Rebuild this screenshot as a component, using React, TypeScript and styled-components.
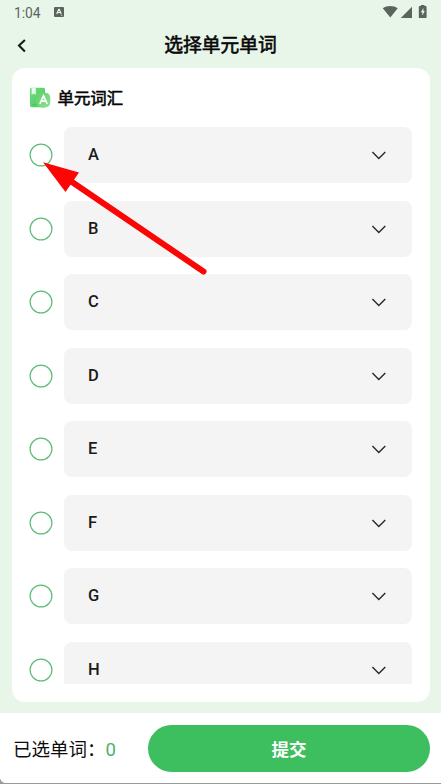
import React from "react";
import styled, { createGlobalStyle } from "styled-components";

const GlobalStyle = createGlobalStyle`
  * { box-sizing: border-box; }
  body {
    margin: 0;
    background: #9a9a9a;
    font-family: Roboto, "Noto Sans CJK SC", sans-serif;
    color: #0d0d0d;
  }
`;

const Screen = styled.main`
  position: relative;
  display: flex;
  flex-direction: column;
  width: 441px;
  height: 783px;
  overflow: hidden;
  background: #e8f6ea;
  border-radius: 0 0 0 6px;
`;

const Page = styled.div`
  height: 784px;
  overflow: hidden;
`;

const StatusBar = styled.div`
  display: flex;
  align-items: center;
  justify-content: space-between;
  height: 24px;
  padding: 0 14px;
  color: #5c635d;
`;

const StatusGroup = styled.div<{ $gap: number }>`
  display: flex;
  align-items: center;
  gap: ${(p) => p.$gap}px;
`;

const Clock = styled.span`
  font-size: 13.8px;
  line-height: 24px;
  letter-spacing: -0.05px;
  padding-top: 1px;
`;

const TitleBar = styled.header`
  display: grid;
  grid-template-columns: 44px 1fr 44px;
  align-items: center;
  height: 44px;
`;

const BackButton = styled.button`
  display: flex;
  padding: 0 0 0 16px;
  border: 0;
  background: none;
  color: #161b17;
`;

const Title = styled.h1`
  margin: 0;
  font-size: 18.8px;
  font-weight: 400;
  line-height: 44px;
  text-align: center;
  color: #080808;
  -webkit-text-stroke: 0.6px #080808;
`;

const Card = styled.section`
  display: flex;
  flex-direction: column;
  height: 634px;
  margin: 0 11px 0 12px;
  padding: 0 18px 18px 17px;
  background: #fff;
  border-radius: 13px;
`;

const CardHeader = styled.div`
  display: flex;
  align-items: center;
  gap: 6.6px;
  height: 59px;
  flex: none;
`;

const CardTitle = styled.h2`
  margin: 0;
  font-size: 16.4px;
  font-weight: 400;
  line-height: 24px;
  color: #080808;
  padding-top: 3px;
  -webkit-text-stroke: 0.6px #080808;
`;

const UnitList = styled.ul`
  display: flex;
  flex-direction: column;
  gap: 17.5px;
  flex: 1;
  min-height: 0;
  margin: 0;
  padding: 0;
  overflow: hidden;
  list-style: none;
`;

const UnitRow = styled.li`
  display: flex;
  align-items: center;
  gap: 11px;
  flex: none;
  height: 56px;
`;

const Radio = styled.span`
  width: 24px;
  height: 24px;
  flex: none;
`;

const UnitPanel = styled.div`
  display: flex;
  align-items: center;
  justify-content: space-between;
  flex: 1;
  height: 56px;
  padding: 0 25px 0 24px;
  background: #f4f4f4;
  border-radius: 8px;
`;

const UnitName = styled.span`
  font-size: 16.5px;
  font-weight: 500;
  line-height: 24px;
  color: #1a1a1a;
`;

const Footer = styled.footer`
  display: flex;
  align-items: center;
  height: 71px;
  margin-top: 11px;
  padding: 0 11px 0 13px;
  background: #fff;
`;

const Summary = styled.div`
  display: flex;
  align-items: center;
  width: 135px;
  padding-top: 3px;
  font-size: 18.5px;
  line-height: 28px;
`;

const Count = styled.span`
  color: #4db167;
`;

const Submit = styled.button`
  flex: 1;
  height: 47px;
  border: 0;
  border-radius: 24px;
  background: #3dbe5f;
  color: #fff;
  font-family: inherit;
  font-size: 17.5px;
  font-weight: 700;
  padding: 0;
`;

const Pointer = styled.svg`
  position: absolute;
  left: 0;
  top: 140px;
  pointer-events: none;
`;

const UNITS = ["A", "B", "C", "D", "E", "F", "G", "H"];

function KeyboardIcon() {
  return (
    <svg width="10" height="10" viewBox="0 0 10 10">
      <rect width="10" height="10" rx="1" fill="currentColor" />
      <path d="M2.700 7 4.700 2.300h.6L7.200 7M3.500 5.500h3" fill="none" stroke="#e8f6ea" strokeWidth="1.200" />
      <path d="M7 8.300h1.300" stroke="#e8f6ea" strokeWidth=".8" />
    </svg>
  );
}

function StatusIcons() {
  return (
    <svg width="46" height="14" viewBox="0 0 46 14" fill="currentColor">
      <path d="M1.800 3.200C6 .2 12.500 .2 16.700 3.200L9.300 12.500Z" />
      <path d="M31 1.800V13H19.800Z" />
      <path d="M39.900 1V0h3.600v1h1.200q.9 0 .9.9v10.300q0 .9-.9.9h-6q-.9 0-.9-.9V1.900q0-.9.9-.9Z" />
      <path d="M42.400 3 39.900 7.200h1.400v3.200l2.500-4.400H42.400Z" fill="#e8f6ea" />
    </svg>
  );
}

function BackIcon() {
  return (
    <svg width="11" height="14" viewBox="0 0 11 14">
      <path d="M8.900 1 3 6.500l5.900 6" fill="none" stroke="currentColor" strokeWidth="2.100" />
    </svg>
  );
}

function BookIcon() {
  return (
    <svg width="22" height="22" viewBox="0 0 22 22">
      <defs>
        <linearGradient id="book" x1="0" y1="0" x2="1" y2="1">
          <stop offset="0" stopColor="#6fdd7d" />
          <stop offset="1" stopColor="#48c665" />
        </linearGradient>
        <linearGradient id="badge" x1="0" y1="0" x2="1" y2="1">
          <stop offset="0" stopColor="#62cd68" />
          <stop offset="1" stopColor="#8ce491" />
        </linearGradient>
      </defs>
      <path d="M2.500 .8h12q1.500 0 1.500 1.500v18H3q-2 0-2-2v-16q0-1.500 1.500-1.500Z" fill="url(#book)" />
      <path d="M2.600.6h4.200v7.400L4.700 6.500 2.600 8Z" fill="#e7faea" />
      <path d="M3 17.500h4.500" stroke="#48c665" strokeWidth="1" />
      <rect x="7.300" y="5.800" width="14" height="14.700" rx="5" fill="url(#badge)" />
      <path d="M10.900 16.800 14.500 8.800l3.700 8M12.200 14.200h4.700" fill="none" stroke="#fff" strokeWidth="1.700" />
    </svg>
  );
}

function ChevronIcon() {
  return (
    <svg width="16" height="10" viewBox="0 0 16 10">
      <path d="M1.400 2 7.800 8.400 14.300 2" fill="none" stroke="#292929" strokeWidth="1.400" />
    </svg>
  );
}

export default function App() {
  return (
    <Page>
      <GlobalStyle />
      <Screen>
        <StatusBar>
          <StatusGroup $gap={14}>
            <Clock>1:04</Clock>
            <KeyboardIcon />
          </StatusGroup>
          <StatusIcons />
        </StatusBar>
        <TitleBar>
          <BackButton aria-label="返回">
            <BackIcon />
          </BackButton>
          <Title>选择单元单词</Title>
        </TitleBar>
        <Card>
          <CardHeader>
            <BookIcon />
            <CardTitle>单元词汇</CardTitle>
          </CardHeader>
          <UnitList>
            {UNITS.map((name) => (
              <UnitRow key={name}>
                <Radio role="radio" aria-checked={false}>
                  <svg width="24" height="24" viewBox="0 0 24 24">
                    <circle cx="12" cy="12" r="10.900" fill="#fff" stroke="#5cbd78" strokeWidth="1.200" />
                  </svg>
                </Radio>
                <UnitPanel>
                  <UnitName>{name}</UnitName>
                  <ChevronIcon />
                </UnitPanel>
              </UnitRow>
            ))}
          </UnitList>
        </Card>
        <Footer>
          <Summary>
            已选单词：<Count>0</Count>
          </Summary>
          <Submit>提交</Submit>
        </Footer>
        <Pointer width="220" height="140" viewBox="0 140 220 140">
          <path d="M203.500 271.500 72 182" stroke="#fb0505" strokeWidth="6" strokeLinecap="round" />
          <path d="M43 162.300 79 172.500 65.500 192Z" fill="#fb0505" />
        </Pointer>
      </Screen>
    </Page>
  );
}
